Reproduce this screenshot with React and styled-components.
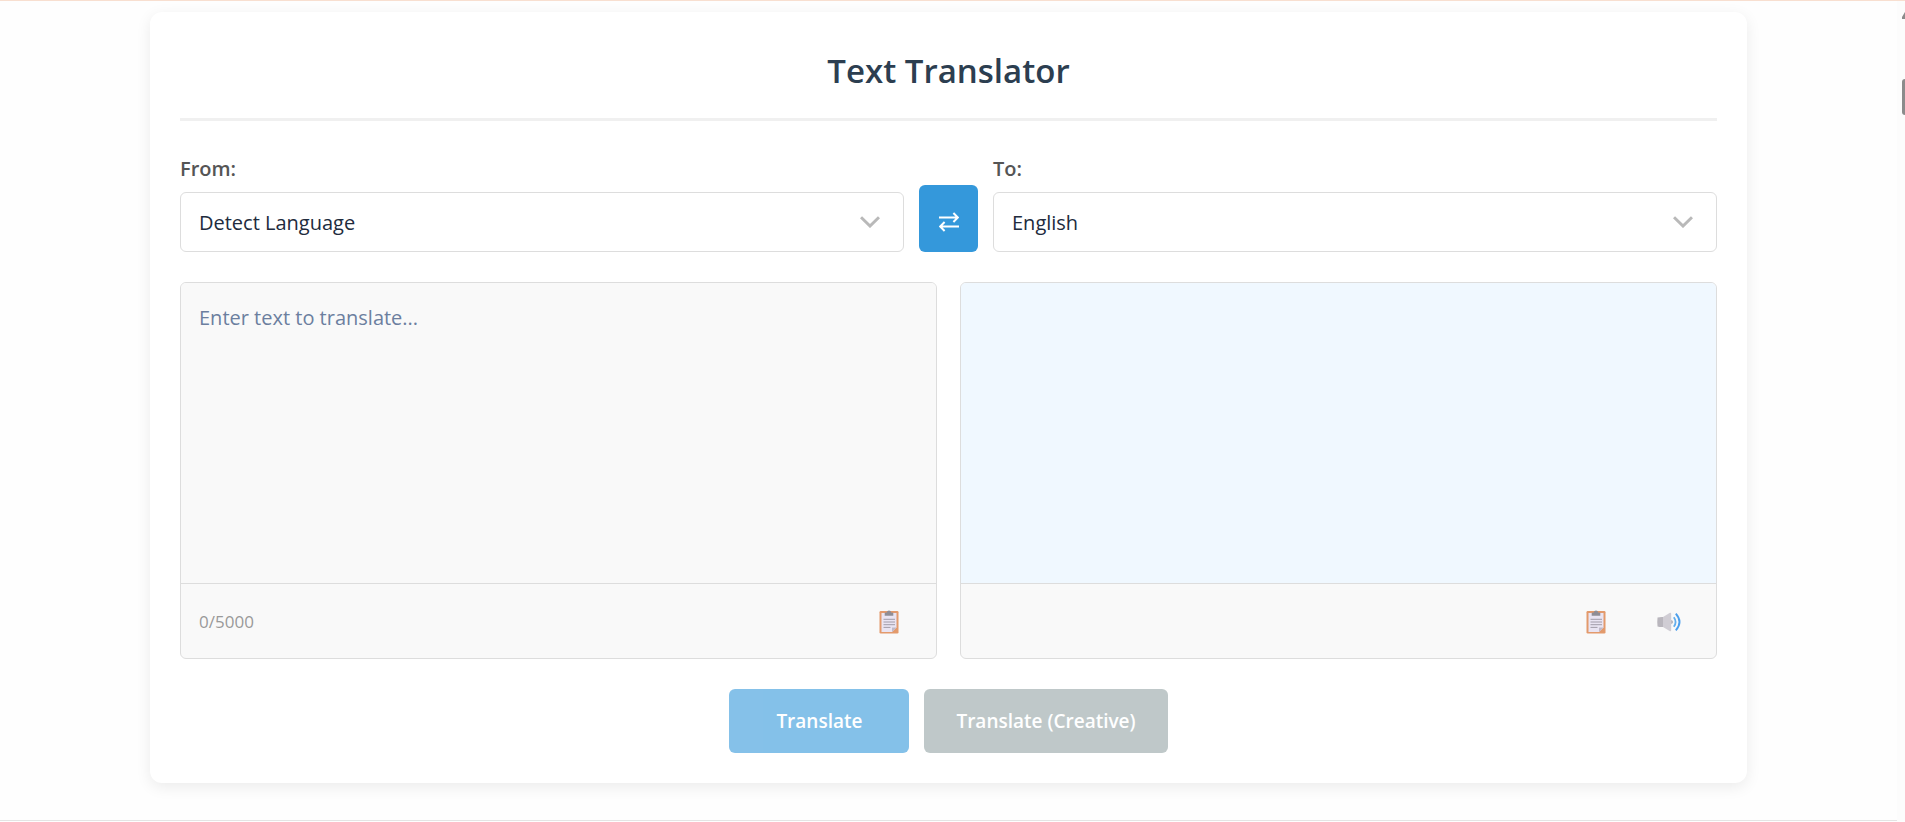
import React, { useState } from 'react';
import styled, { createGlobalStyle } from 'styled-components';

const MAX_LENGTH = 5000;

const App = () => {
  const [from, setFrom] = useState('auto');
  const [to, setTo] = useState('en');
  const [text, setText] = useState('');
  const [result, setResult] = useState('');

  const handleSwap = () => {
    if (from === 'auto') return;
    setFrom(to);
    setTo(from);
    setText(result);
    setResult(text);
  };

  const handleCopy = (value) => {
    if (value && navigator.clipboard) {
      navigator.clipboard.writeText(value);
    }
  };

  const handleSpeak = () => {
    if (result && window.speechSynthesis) {
      window.speechSynthesis.speak(new SpeechSynthesisUtterance(result));
    }
  };

  return (
    <>
      <GlobalStyle />
      <Page>
        <Main>
          <Card>
            <Title>Text Translator</Title>

            <LanguageRow>
              <Field>
                <Label htmlFor="from">From:</Label>
                <SelectBox>
                  <Select id="from" value={from} onChange={(e) => setFrom(e.target.value)}>
                    <option value="auto">Detect Language</option>
                    <option value="en">English</option>
                  </Select>
                  <Chevron />
                </SelectBox>
              </Field>
              <SwapButton type="button" onClick={handleSwap} aria-label="Swap languages">
                <SwapIcon />
              </SwapButton>
              <Field>
                <Label htmlFor="to">To:</Label>
                <SelectBox>
                  <Select id="to" value={to} onChange={(e) => setTo(e.target.value)}>
                    <option value="en">English</option>
                  </Select>
                  <Chevron />
                </SelectBox>
              </Field>
            </LanguageRow>

            <Panels>
              <Panel>
                <TextArea
                  aria-label="Text to translate"
                  placeholder="Enter text to translate..."
                  maxLength={MAX_LENGTH}
                  value={text}
                  onChange={(e) => setText(e.target.value)}
                />
                <PanelFooter>
                  <Counter>{text.length}/{MAX_LENGTH}</Counter>
                  <IconButton type="button" onClick={() => handleCopy(text)} aria-label="Copy text">
                    <ClipboardIcon />
                  </IconButton>
                </PanelFooter>
              </Panel>
              <Panel>
                <TextArea $output aria-label="Translation" readOnly value={result} />
                <PanelFooter>
                  <Counter />
                  <IconButton type="button" onClick={() => handleCopy(result)} aria-label="Copy translation">
                    <ClipboardIcon />
                  </IconButton>
                  <IconButton type="button" onClick={handleSpeak} aria-label="Listen">
                    <SpeakerIcon />
                  </IconButton>
                </PanelFooter>
              </Panel>
            </Panels>

            <Actions>
              <ActionButton type="button" disabled={!text} $color="#3498db">Translate</ActionButton>
              <ActionButton type="button" disabled={!text} $color="#95a5a6">Translate (Creative)</ActionButton>
            </Actions>
          </Card>
          <SectionEnd />
        </Main>
        <ScrollTrack aria-hidden="true">
          <svg width="3" height="7" viewBox="0 0 3 7">
            <path d="M0 7V5L3 0V7Z" fill="#8b8b8b" />
          </svg>
          <ScrollThumb />
        </ScrollTrack>
      </Page>
    </>
  );
};

export default App;

const Chevron = () => (
  <ChevronSvg width="20" height="12" viewBox="0 0 20 12" fill="none" aria-hidden="true">
    <path d="M1 1.2L10 10L19 1.2" stroke="#b9b9b9" strokeWidth="3" />
  </ChevronSvg>
);

const SwapIcon = () => (
  <svg width="20" height="20" viewBox="0 0 20 20" fill="none" stroke="#fff" strokeWidth="2" aria-hidden="true">
    <path d="M0 5.5H19M14.4 1L18.9 5.5L14.4 10" />
    <path d="M20 14.5H1M5.6 10L1.1 14.5L5.6 19" />
  </svg>
);

const ClipboardIcon = () => (
  <svg width="20" height="24" viewBox="0 0 20 24" aria-hidden="true">
    <rect x="0.5" y="1" width="19" height="22.5" rx="1.2" fill="#e39a6c" />
    <path d="M2.5 3H17.5V17.5L13 22H2.5Z" fill="#e9e4f2" />
    <path d="M17.5 17.5L13 22V17.5Z" fill="#bfb9c9" />
    <path d="M5.7 5.8V3.2Q5.7 2.4 6.5 2.4H7.8Q8 0.6 10 0.6Q12 0.6 12.2 2.4H13.5Q14.3 2.4 14.3 3.2V5.8Z" fill="#8f8d95" />
    <path d="M4.5 9.3H16M4.5 12H16M4.5 14.7H16M4.5 17.4H11.5" stroke="#98939f" strokeWidth="0.9" />
  </svg>
);

const SpeakerIcon = () => (
  <svg width="24" height="20" viewBox="0 0 24 20" fill="none" aria-hidden="true">
    <path d="M0.5 5.5Q0 10 0.5 14.5Q3 15.2 6.5 15V5Q3 4.8 0.5 5.5Z" fill="#b9b6bd" />
    <path d="M6 5L13 0.7Q14.2 0.4 14.2 2V18Q14.2 19.6 13 19.3L6 15Z" fill="#d0cdd4" />
    <path d="M14.2 8Q16 8.4 16 10Q16 11.6 14.2 12Z" fill="#b0adb6" />
    <path d="M16.8 5.2Q20.4 10 16.8 14.8" stroke="#62aeee" strokeWidth="1.8" />
    <path d="M18.8 1.7Q26.2 10 18.8 18.3" stroke="#4c9fec" strokeWidth="1.9" />
  </svg>
);

const GlobalStyle = createGlobalStyle`
  * {
    box-sizing: border-box;
  }
  body {
    margin: 0;
    background: #fefefe;
    color: #2c3e50;
    font-family: 'Segoe UI', 'Open Sans', sans-serif;
  }
  button,
  select,
  textarea {
    font-family: inherit;
  }
`;

const Page = styled.div`
  display: flex;
  border-top: 1px solid #f8dfd0;
`;

const Main = styled.main`
  flex: 1;
  min-width: 0;
  padding-top: 11px;
`;

const Card = styled.section`
  max-width: 1597px;
  margin: 0 auto;
  padding: 30px;
  background: #fff;
  border-radius: 12px;
  box-shadow: 0 4px 15px rgba(0, 0, 0, 0.08);
`;

const Title = styled.h1`
  margin: 0 0 32px;
  padding-bottom: 18px;
  border-bottom: 3px solid #f0f0f0;
  color: #2c3e50;
  font-size: 33px;
  font-weight: 600;
  line-height: 58px;
  text-align: center;
`;

const LanguageRow = styled.div`
  display: flex;
  align-items: flex-end;
  gap: 15px;
  margin-bottom: 30px;
`;

const Field = styled.div`
  flex: 1;
  display: flex;
  flex-direction: column;
  gap: 7px;
`;

const Label = styled.label`
  color: #555;
  font-size: 20px;
  font-weight: 600;
  line-height: 32px;
`;

const SelectBox = styled.div`
  position: relative;
`;

const Select = styled.select`
  display: block;
  width: 100%;
  height: 60px;
  padding: 0 56px 0 18px;
  appearance: none;
  border: 1px solid #ddd;
  border-radius: 6px;
  background: #fff;
  color: #212b3d;
  font-size: 20px;
`;

const ChevronSvg = styled.svg`
  position: absolute;
  top: 24px;
  right: 24px;
  pointer-events: none;
`;

const SwapButton = styled.button`
  display: flex;
  align-items: center;
  justify-content: center;
  width: 59px;
  height: 67px;
  padding: 6px 0 0;
  border: none;
  border-radius: 6px;
  background: #3498db;
  cursor: pointer;
`;

const Panels = styled.div`
  display: grid;
  grid-template-columns: 1fr 1fr;
  gap: 23px;
  margin-bottom: 30px;
`;

const Panel = styled.div`
  display: flex;
  flex-direction: column;
  overflow: hidden;
  border: 1px solid #ddd;
  border-radius: 6px;
  background: #f9f9f9;
`;

const TextArea = styled.textarea`
  display: block;
  width: 100%;
  height: 300px;
  padding: 18px;
  border: none;
  outline: none;
  resize: none;
  background: ${({ $output }) => ($output ? '#f0f8ff' : '#f9f9f9')};
  color: #212b3d;
  font-size: 20px;
  line-height: 34px;
  &::placeholder {
    color: #6c7f9f;
  }
`;

const PanelFooter = styled.div`
  display: flex;
  align-items: center;
  gap: 15px;
  height: 75px;
  padding: 0 18px;
  border-top: 1px solid #ddd;
`;

const Counter = styled.span`
  flex: 1;
  color: #999;
  font-size: 17px;
`;

const IconButton = styled.button`
  display: flex;
  align-items: center;
  justify-content: center;
  width: 58px;
  height: 48px;
  padding: 2px 0 0;
  border: none;
  background: none;
  cursor: pointer;
`;

const Actions = styled.div`
  display: flex;
  justify-content: center;
  gap: 15px;
`;

const ActionButton = styled.button`
  min-width: 180px;
  height: 64px;
  padding: 0 32px;
  border: none;
  border-radius: 6px;
  background: ${({ $color }) => $color};
  color: #fff;
  font-size: 19px;
  font-weight: 600;
  cursor: pointer;
  &:disabled {
    opacity: 0.6;
    cursor: not-allowed;
  }
`;

const SectionEnd = styled.div`
  margin-top: 37px;
  border-top: 1px solid #e4e4e4;
`;

const ScrollTrack = styled.div`
  display: flex;
  flex-direction: column;
  align-items: flex-end;
  gap: 60px;
  width: 8px;
  padding-top: 11px;
  background: #fcfcfc;
`;

const ScrollThumb = styled.div`
  width: 3px;
  height: 36px;
  border-radius: 3px 0 0 3px;
  background: #8b8b8b;
`;
